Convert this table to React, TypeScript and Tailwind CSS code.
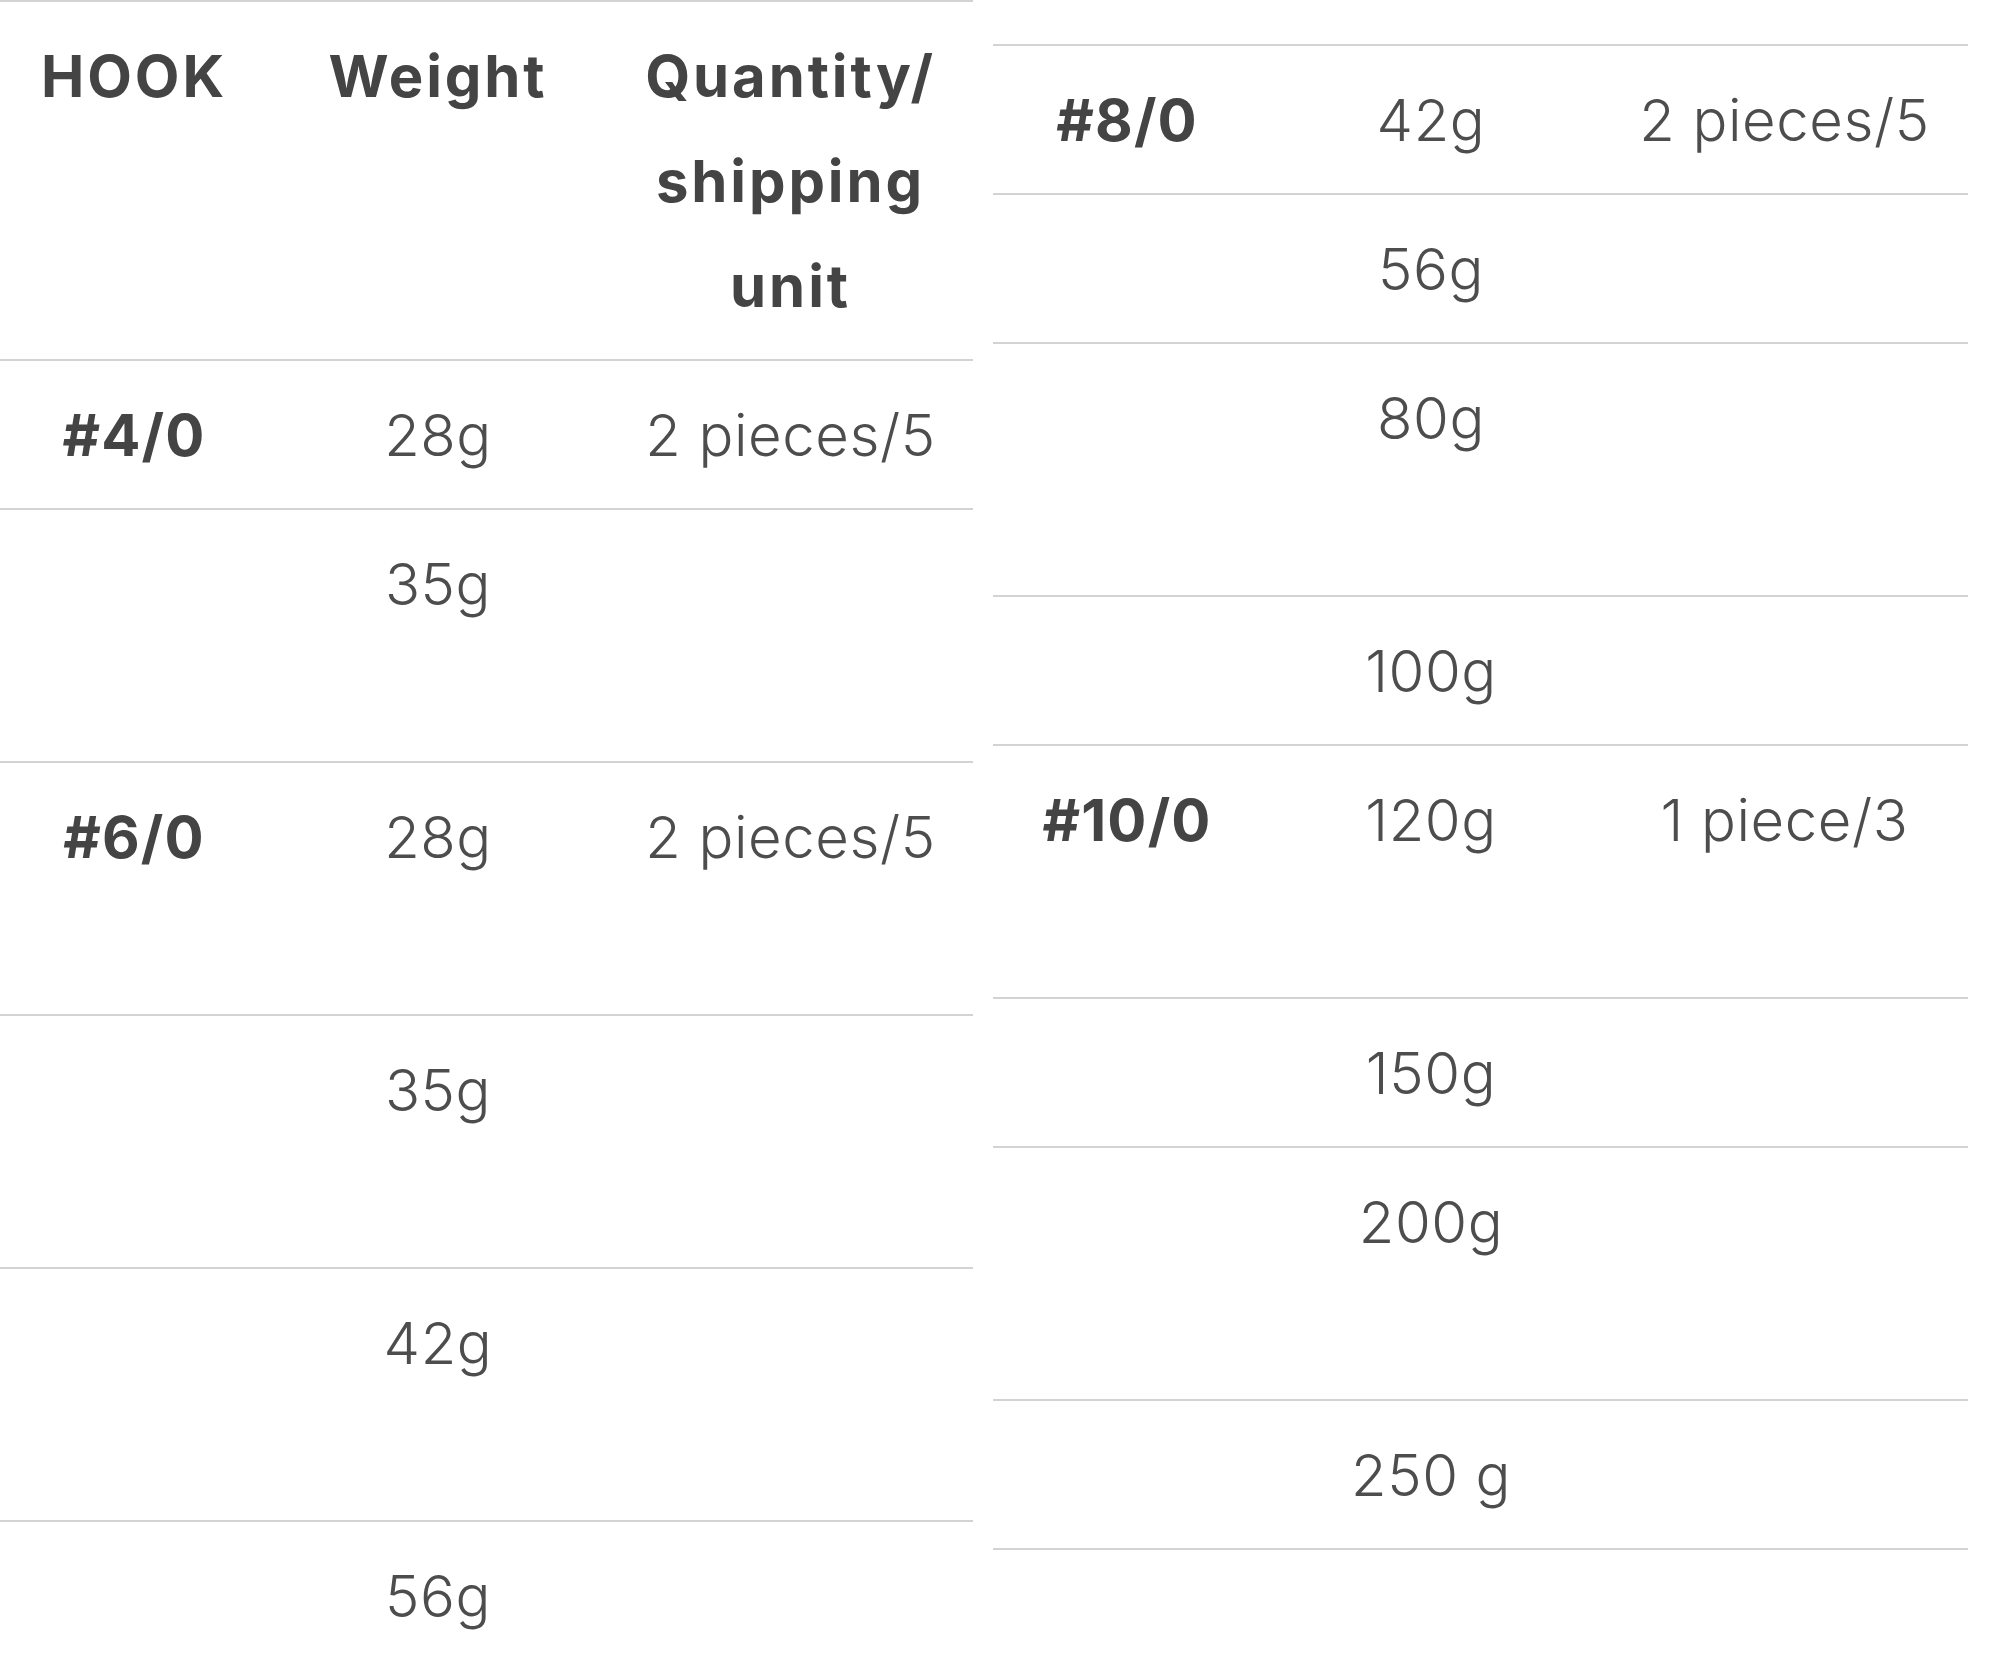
const leftRows = [
  { hook: "#4/0", weight: "28g", qty: "2 pieces/5", tall: false },
  { hook: "", weight: "35g", qty: "", tall: true },
  { hook: "#6/0", weight: "28g", qty: "2 pieces/5", tall: true },
  { hook: "", weight: "35g", qty: "", tall: true },
  { hook: "", weight: "42g", qty: "", tall: true },
  { hook: "", weight: "56g", qty: "", tall: true },
];

const rightRows = [
  { hook: "#8/0", weight: "42g", qty: "2 pieces/5", tall: false },
  { hook: "", weight: "56g", qty: "", tall: false },
  { hook: "", weight: "80g", qty: "", tall: true },
  { hook: "", weight: "100g", qty: "", tall: false },
  { hook: "#10/0", weight: "120g", qty: "1 piece/3", tall: true },
  { hook: "", weight: "150g", qty: "", tall: false },
  { hook: "", weight: "200g", qty: "", tall: true },
  { hook: "", weight: "250 g", qty: "", tall: false },
];

type Row = { hook: string; weight: string; qty: string; tall: boolean };

const SizeRow = ({ row }: { row: Row }) => {
  return (
    <div
      className={`grid grid-cols-[268px_340px_1fr] border-b-2 border-[#d3d3d3] pt-[22px] ${
        row.tall ? "h-[253px]" : "h-[149px]"
      }`}
    >
      <div className="text-center font-bold text-[#444] tracking-[0.02em]">
        {row.hook}
      </div>
      <div className="text-center font-light text-[#4d4d4d] tracking-[0.01em]">
        {row.weight}
      </div>
      <div className="text-center font-light text-[#4d4d4d] tracking-[0.01em] whitespace-nowrap overflow-hidden">
        {row.qty}
      </div>
    </div>
  );
};

export default function App() {
  return (
    <div
      className="w-[2000px] h-[1674px] overflow-hidden bg-white flex gap-[20px] text-[58px] leading-[105px]"
      style={{ fontFamily: "Inter, 'DejaVu Sans', sans-serif" }}
    >
      <div className="w-[973px] shrink-0 border-t-2 border-[#d3d3d3]">
        <div className="grid grid-cols-[268px_340px_1fr] border-b-2 border-[#d3d3d3] pt-[22px] h-[359px] font-bold text-[#444] tracking-[0.05em]">
          <div className="text-center">HOOK</div>
          <div className="text-center">Weight</div>
          <div className="text-center">
            <div>Quantity/</div>
            <div>shipping</div>
            <div>unit</div>
          </div>
        </div>
        {leftRows.map((row, i) => (
          <SizeRow key={i} row={row} />
        ))}
      </div>
      <div className="w-[975px] shrink-0 mt-[44px] border-t-2 border-[#d3d3d3] self-start">
        {rightRows.map((row, i) => (
          <SizeRow key={i} row={row} />
        ))}
      </div>
    </div>
  );
}
